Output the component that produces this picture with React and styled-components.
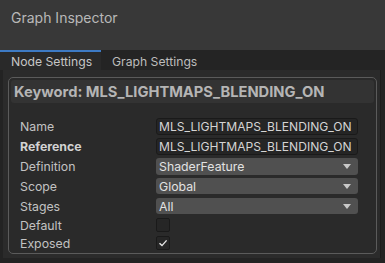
import React from "react";
import styled, { createGlobalStyle } from "styled-components";

const Global = createGlobalStyle`
  html, body { margin: 0; padding: 0; background: #232323; }
  body { font-family: Inter, "Noto Sans", sans-serif; -webkit-font-smoothing: antialiased; }
`;

const Window = styled.div`
  width: 385px;
  height: 263px;
  display: flex;
  flex-direction: column;
  background: #232323;
  overflow: hidden;
`;

const Header = styled.div`
  height: 50px;
  flex: none;
  background: #383838;
  color: #b8b8b8;
  font-size: 14px;
  padding: 9px 0 0 11px;
  box-sizing: border-box;
`;

const TabBar = styled.div`
  height: 20px;
  flex: none;
  display: flex;
  background: #242424;
`;

const Tab = styled.div`
  box-sizing: border-box;
  height: 20px;
  padding: 0 11px;
  display: flex;
  align-items: center;
  white-space: nowrap;
  font-size: 12.2px;
  color: ${(p) => (p.$active ? "#c6c6c6" : "#bdbdbd")};
  background: ${(p) => (p.$active ? "#292929" : "transparent")};
  border-top: 2px solid ${(p) => (p.$active ? "#3d7ac4" : "transparent")};
  width: ${(p) => (p.$active ? "101px" : "auto")};
`;

const Body = styled.div`
  flex: 1;
  background: #2b2b2b;
  margin: 0 4px 5px 3px;
  padding: 7px 0 0 5px;
  border-right: 1px solid #1c1c1c;
`;

const Panel = styled.div`
  width: 369px;
  height: 177px;
  box-sizing: border-box;
  border: 1px solid #5b5b5b;
  border-radius: 5px;
  padding: 2px 2px 0 2px;
  background: #2a2a2a;
`;

const PanelTitle = styled.div`
  height: 23px;
  background: #333333;
  border-radius: 3px;
  display: flex;
  align-items: center;
  padding-left: 3px;
  font-size: 14.7px;
  font-weight: 700;
  color: #b5b5b5;
  white-space: nowrap;
`;

const Rows = styled.div`
  display: flex;
  flex-direction: column;
  padding: 13px 0 0 9px;
`;

const Row = styled.div`
  display: grid;
  grid-template-columns: 136px 202px;
  align-items: center;
  height: ${(p) => (p.$short ? "18px" : "20px")};
`;

const Label = styled.div`
  font-size: 12.3px;
  color: ${(p) => (p.$bold ? "#d2d2d2" : "#c2c2c2")};
  font-weight: ${(p) => (p.$bold ? 700 : 400)};
`;

const TextField = styled.div`
  height: 17px;
  box-sizing: border-box;
  background: #252525;
  border: 1px solid #1a1a1a;
  border-radius: 3px;
  padding-left: 2px;
  display: flex;
  align-items: center;
  font-size: 12.1px;
  color: #d4d4d4;
  white-space: nowrap;
  overflow: hidden;
`;

const Dropdown = styled.div`
  height: ${(p) => (p.$h || 17)}px;
  box-sizing: border-box;
  background: #505050;
  border-radius: 3px;
  padding: 0 7px 0 3px;
  display: flex;
  align-items: center;
  justify-content: space-between;
  font-size: 12.3px;
  color: #e2e2e2;
`;

const Arrow = styled.span`
  width: 0;
  height: 0;
  border-left: 4px solid transparent;
  border-right: 4px solid transparent;
  border-top: 5px solid #c8c8c8;
`;

const Check = styled.div`
  width: 14px;
  height: 14px;
  box-sizing: border-box;
  background: #262626;
  border: 1px solid #1a1a1a;
  border-radius: 2px;
  display: flex;
  align-items: center;
  justify-content: center;
`;

const CheckBox = ({ checked }) => (
  <Check>
    {checked && (
      <svg width="10" height="10" viewBox="0 0 10 10">
        <path d="M1.5 5.2 L4 7.6 L8.6 2.4" fill="none" stroke="#e6e6e6" strokeWidth="1.4" />
      </svg>
    )}
  </Check>
);

export default function App() {
  return (
    <>
      <Global />
      <Window>
        <Header>Graph Inspector</Header>
        <TabBar>
          <Tab $active>Node Settings</Tab>
          <Tab>Graph Settings</Tab>
        </TabBar>
        <Body>
          <Panel>
            <PanelTitle>Keyword: MLS_LIGHTMAPS_BLENDING_ON</PanelTitle>
            <Rows>
              <Row>
                <Label>Name</Label>
                <TextField>MLS_LIGHTMAPS_BLENDING_ON</TextField>
              </Row>
              <Row>
                <Label $bold>Reference</Label>
                <TextField>MLS_LIGHTMAPS_BLENDING_ON</TextField>
              </Row>
              <Row>
                <Label>Definition</Label>
                <Dropdown>ShaderFeature<Arrow /></Dropdown>
              </Row>
              <Row>
                <Label>Scope</Label>
                <Dropdown $h={16}>Global<Arrow /></Dropdown>
              </Row>
              <Row>
                <Label>Stages</Label>
                <Dropdown $h={16}>All<Arrow /></Dropdown>
              </Row>
              <Row $short>
                <Label>Default</Label>
                <CheckBox />
              </Row>
              <Row $short>
                <Label>Exposed</Label>
                <CheckBox checked />
              </Row>
            </Rows>
          </Panel>
        </Body>
      </Window>
    </>
  );
}
